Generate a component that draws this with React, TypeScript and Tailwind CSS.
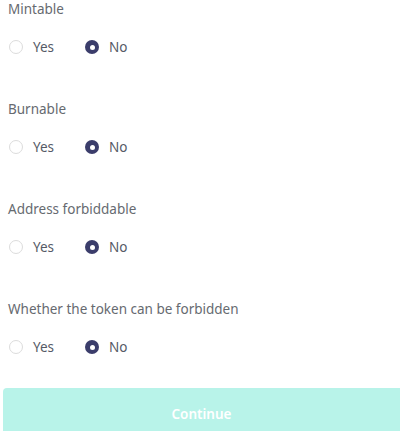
import React, { useState } from 'react';

interface Option {
  id: string;
  label: string;
}

const options: Option[] = [
  { id: 'mintable', label: 'Mintable' },
  { id: 'burnable', label: 'Burnable' },
  { id: 'forbiddable', label: 'Address forbiddable' },
  { id: 'forbidden', label: 'Whether the token can be forbidden' },
];

const Radio: React.FC<{ checked: boolean; label: string; onClick: () => void }> = ({ checked, label, onClick }) => (
  <button type="button" onClick={onClick} className="flex items-center gap-[10px] h-[18px]">
    {checked ? (
      <span className="w-[14px] h-[14px] rounded-full bg-[#3b3d6b] flex items-center justify-center">
        <span className="w-[5px] h-[5px] rounded-full bg-white" />
      </span>
    ) : (
      <span className="w-[14px] h-[14px] rounded-full border border-[#dcdcdc] bg-white" />
    )}
    <span className="text-[13.5px] text-[#555a66]">{label}</span>
  </button>
);

const App: React.FC = () => {
  const [values, setValues] = useState<Record<string, boolean>>({
    mintable: false,
    burnable: false,
    forbiddable: false,
    forbidden: false,
  });

  return (
    <div className="w-[400px] h-[431px] overflow-hidden bg-white flex flex-col" style={{ fontFamily: '"Noto Sans", "Open Sans", sans-serif' }}>
      <div className="px-[8px]">
        {options.map((opt) => (
          <div key={opt.id} className="h-[100px]">
            <div className="h-[18px] leading-[18px] text-[13.5px] text-[#666a70]">{opt.label}</div>
            <div className="mt-[20px] flex items-center gap-[31px] pl-[1px]">
              <Radio checked={values[opt.id]} label="Yes" onClick={() => setValues({ ...values, [opt.id]: true })} />
              <Radio checked={!values[opt.id]} label="No" onClick={() => setValues({ ...values, [opt.id]: false })} />
            </div>
          </div>
        ))}
      </div>
      <div className="h-[31px] -mt-[12px] bg-gradient-to-b from-white to-[#e6faf6]" />
      <button type="button" className="ml-[3px] h-[60px] shrink-0 rounded-tl-[4px] bg-[#b8f3e9] text-white text-[13.5px] font-semibold pb-[8px]">
        Continue
      </button>
    </div>
  );
};

export default App;
